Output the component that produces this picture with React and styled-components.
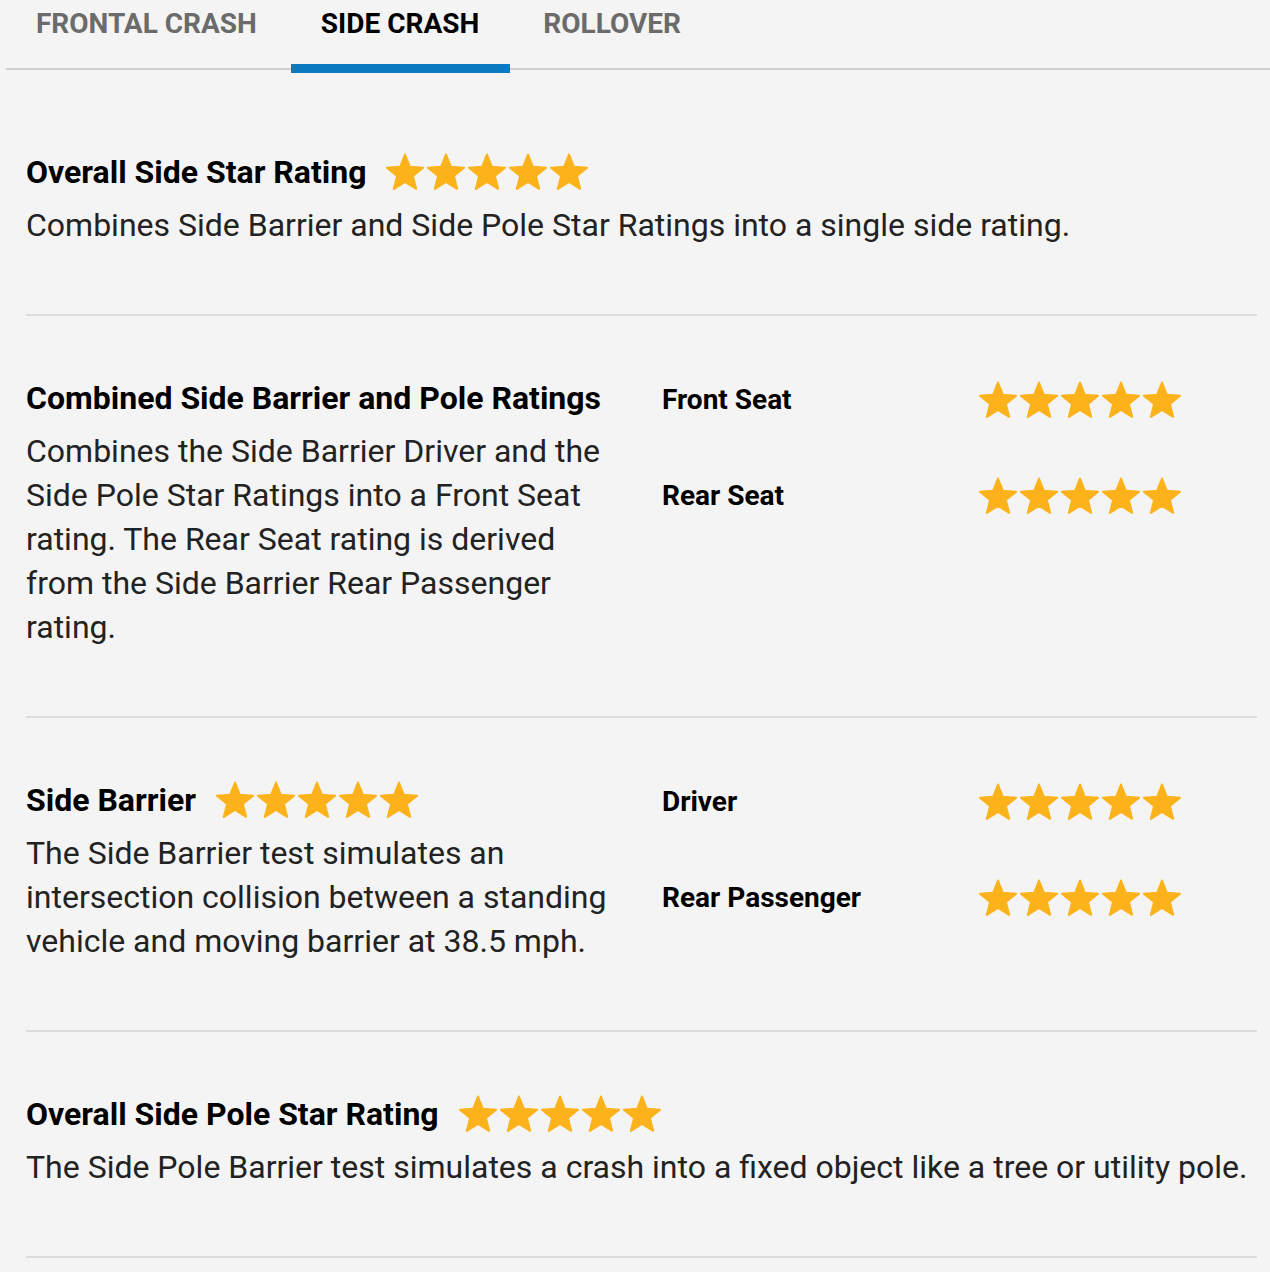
import React from 'react';
import styled, { createGlobalStyle } from 'styled-components';

const GlobalStyle = createGlobalStyle`
  html, body {
    margin: 0;
    padding: 0;
    background: #f4f4f4;
  }
  body {
    font-family: Roboto, "Liberation Sans", Arial, sans-serif;
    color: #222;
  }
`

const Page = styled.div`
  width: 1270px;
  min-height: 1272px;
  background: #f4f4f4;
`

const TabBar = styled.div`
  display: flex;
  gap: 3px;
  margin-left: 6px;
  height: 68px;
  border-bottom: 2px solid #cfcfcf;
`

const Tab = styled.div`
  position: relative;
  padding: 8px 31px 0 30px;
  font-size: 28px;
  line-height: 32px;
  font-weight: 700;
  text-transform: uppercase;
  color: ${p => (p.active ? '#000' : '#6b6b6b')};

  &::after {
    content: '';
    display: ${p => (p.active ? 'block' : 'none')};
    position: absolute;
    left: 0;
    right: 0;
    bottom: -5px;
    height: 9px;
    background: #0b7bc1;
  }
`

const Content = styled.div`
  margin: 0 13px 0 26px;
`

const Section = styled.section`
  display: grid;
  grid-template-columns: 604px 286px auto;
  column-gap: 32px;
  align-items: start;
  padding: ${p => (p.first ? '80px' : '60px')} 0 67px;
  border-bottom: 2px solid #dcdcdc;
`

const Main = styled.div`
  grid-column: ${p => (p.wide ? '1 / 4' : '1 / 2')};
`

const HeadingRow = styled.div`
  display: flex;
  align-items: center;
  gap: 19px;
  margin-bottom: 9px;
`

const Heading = styled.h2`
  margin: 0;
  font-size: 32px;
  line-height: 44px;
  font-weight: 700;
  color: #000;
  white-space: nowrap;
`

const Description = styled.p`
  margin: 0;
  font-size: 32px;
  line-height: 44px;
  font-weight: 400;
  color: #222;
`

const RatingList = styled.div`
  grid-column: 2 / 4;
  display: grid;
  grid-template-columns: 286px auto;
  column-gap: 30px;
  row-gap: 52px;
  align-items: center;
  padding-top: 2px;
`

const Label = styled.div`
  font-size: 28px;
  line-height: 44px;
  font-weight: 700;
  color: #000;
`

const StarRow = styled.div`
  display: flex;
  gap: 1px;
`

const starPoints = (() => {
  const pts = [];
  for (let k = 0; k < 10; k++) {
    const a = ((-90 + k * 36) * Math.PI) / 180;
    const r = k % 2 === 0 ? 19 : 8.3;
    pts.push(`${(20 + r * Math.cos(a)).toFixed(2)},${(20.5 + r * Math.sin(a)).toFixed(2)}`);
  }
  return pts.join(' ');
})();

const Star = () => (
  <svg width="40" height="38" viewBox="0 0 40 38">
    <polygon
      points={starPoints}
      fill="#fcb31b"
      stroke="#fcb31b"
      strokeWidth="2"
      strokeLinejoin="round"
    />
  </svg>
)

const Stars = ({ count = 5 }) => (
  <StarRow>
    {Array.from({ length: count }).map((_, i) => (
      <Star key={i} />
    ))}
  </StarRow>
)

const sections = [
  {
    title: 'Overall Side Star Rating',
    stars: 5,
    text: 'Combines Side Barrier and Side Pole Star Ratings into a single side rating.',
  },
  {
    title: 'Combined Side Barrier and Pole Ratings',
    text: 'Combines the Side Barrier Driver and the Side Pole Star Ratings into a Front Seat rating. The Rear Seat rating is derived from the Side Barrier Rear Passenger rating.',
    ratings: [
      { label: 'Front Seat', stars: 5 },
      { label: 'Rear Seat', stars: 5 },
    ],
  },
  {
    title: 'Side Barrier',
    stars: 5,
    text: 'The Side Barrier test simulates an intersection collision between a standing vehicle and moving barrier at 38.5 mph.',
    ratings: [
      { label: 'Driver', stars: 5 },
      { label: 'Rear Passenger', stars: 5 },
    ],
  },
  {
    title: 'Overall Side Pole Star Rating',
    stars: 5,
    text: 'The Side Pole Barrier test simulates a crash into a fixed object like a tree or utility pole.',
  },
];

const tabs = ['Frontal Crash', 'Side Crash', 'Rollover'];

export default function App() {
  return (
    <Page>
      <GlobalStyle />
      <TabBar>
        {tabs.map(t => (
          <Tab key={t} active={t === 'Side Crash'}>{t}</Tab>
        ))}
      </TabBar>
      <Content>
        {sections.map((s, i) => (
          <Section key={s.title} first={i === 0}>
            <Main wide={!s.ratings}>
              <HeadingRow>
                <Heading>{s.title}</Heading>
                {s.stars && <Stars count={s.stars} />}
              </HeadingRow>
              <Description>{s.text}</Description>
            </Main>
            {s.ratings && (
              <RatingList>
                {s.ratings.map(r => (
                  <React.Fragment key={r.label}>
                    <Label>{r.label}</Label>
                    <Stars count={r.stars} />
                  </React.Fragment>
                ))}
              </RatingList>
            )}
          </Section>
        ))}
      </Content>
    </Page>
  );
}
